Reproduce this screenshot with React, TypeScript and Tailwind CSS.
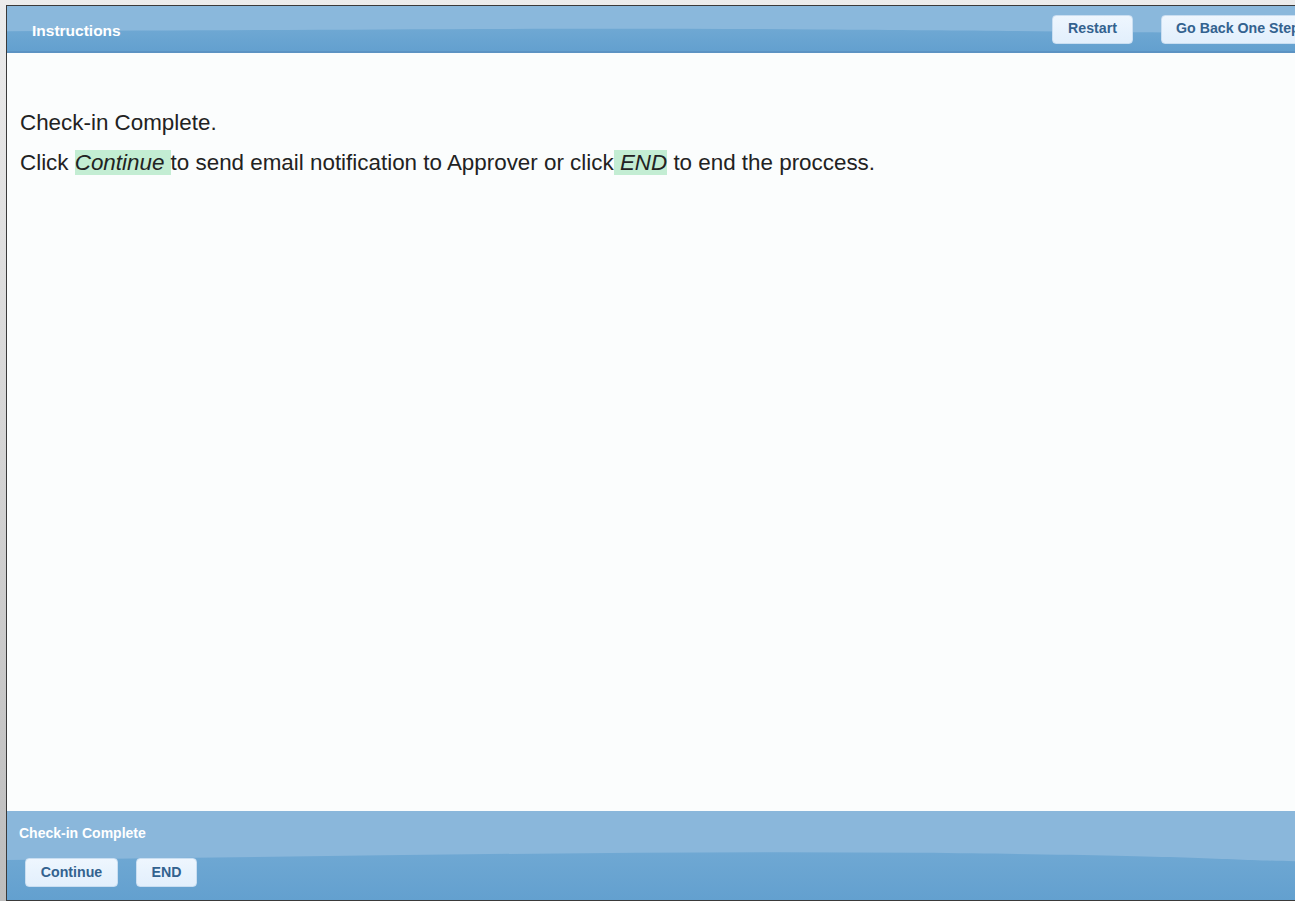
import React from "react";

const font = { fontFamily: '"Liberation Sans", Arial, sans-serif' };

function Wave({ top, bottom }: { top: string; bottom: string }) {
  // glossy two-tone band with a soft curve, like the old theme bars
  return (
    <svg
      className="absolute inset-0 h-full w-full"
      viewBox="0 0 1300 100"
      preserveAspectRatio="none"
    >
      <rect width="1300" height="100" fill={top} />
      <path d={bottom} fill="url(#lower)" />
      <defs>
        <linearGradient id="lower" x1="0" y1="0" x2="0" y2="1">
          <stop offset="0" stopColor="#6fa8d3" />
          <stop offset="1" stopColor="#63a0cf" />
        </linearGradient>
      </defs>
    </svg>
  );
}

function BarButton({ label, className = "" }: { label: string; className?: string }) {
  return (
    <button
      className={`h-[29px] rounded-[4px] border border-[#c9def1] bg-gradient-to-b from-[#eef6fe] to-[#e2effc] text-[14.2px] font-bold text-[#33628f] ${className}`}
    >
      {label}
    </button>
  );
}

export default function App() {
  return (
    <div
      className="h-[901px] w-[1295px] overflow-hidden bg-gradient-to-b from-[#ececec] to-[#bdbdbd] pl-[6px] pt-[5px]"
      style={font}
    >
      <div className="flex h-[896px] w-[1320px] flex-col border-l border-t border-b border-[#3a3a3a] bg-[#fbfdfd]">
        {/* Header */}
        <div className="relative h-[47px] shrink-0 border-b-2 border-[#5c93c3]">
          <Wave top="#8ab8dc" bottom="M0 56 C 300 54, 500 48, 800 52 S 1200 62, 1300 60 L1300 100 L0 100 Z" />
          <div className="relative flex h-full items-center pl-[25px]">
            <span className="pt-[4px] text-[15.5px] font-bold text-white">Instructions</span>
            <div className="ml-auto flex gap-[28px] pr-[14px] pt-[1px]">
              <BarButton label="Restart" className="w-[81px]" />
              <BarButton label="Go Back One Step" className="w-[151px] pl-[14px] text-left" />
            </div>
          </div>
        </div>

        {/* Body */}
        <div className="flex-1 px-[13px] pt-[57px] text-[22.4px] leading-[26px] text-[#222222]">
          <p>Check-in Complete.</p>
          <p className="mt-[14px]">
            Click <em className="bg-[#c3edd3]">Continue </em>to send email notification to Approver or click
            <em className="bg-[#c3edd3]"> END</em> to end the proccess.
          </p>
        </div>

        {/* Footer */}
        <div className="relative h-[89px] shrink-0">
          <Wave top="#8ab7db" bottom="M0 55 C 300 52, 600 44, 900 47 S 1200 56, 1300 57 L1300 100 L0 100 Z" />
          <div className="relative flex h-full flex-col pl-[12px] pt-[12px]">
            <span className="text-[14px] font-bold text-white">Check-in Complete</span>
            <div className="mt-[14px] flex gap-[18px] pl-[6px]">
              <BarButton label="Continue" className="w-[93px]" />
              <BarButton label="END" className="w-[61px]" />
            </div>
          </div>
        </div>
      </div>
    </div>
  );
}
